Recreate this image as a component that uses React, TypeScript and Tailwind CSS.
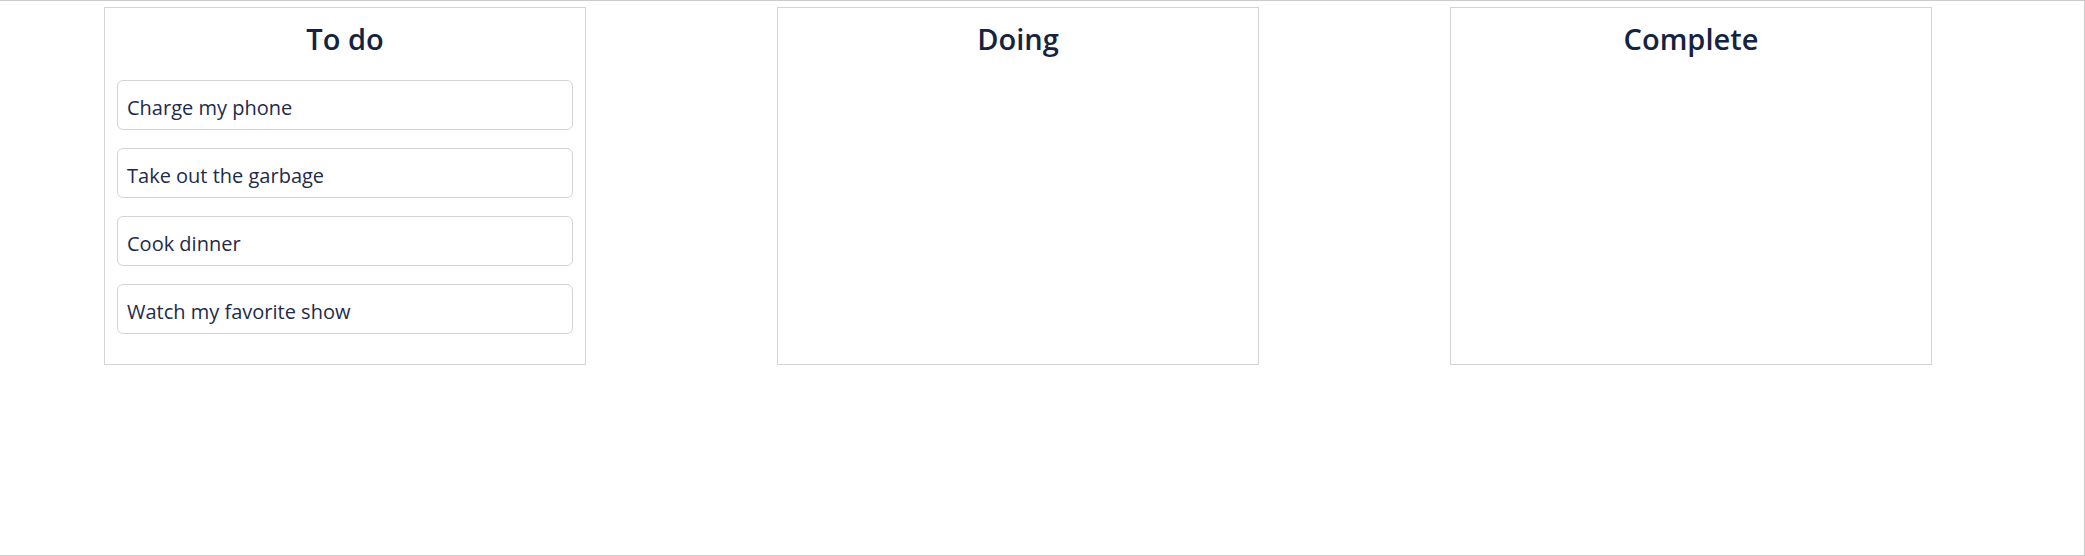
const columns = [
  {
    title: 'To do',
    items: ['Charge my phone', 'Take out the garbage', 'Cook dinner', 'Watch my favorite show'],
  },
  { title: 'Doing', items: [] as string[] },
  { title: 'Complete', items: [] as string[] },
];

const App = () => {
  return (
    <div
      className="h-[556px] w-full border-t border-r border-b border-[#cccccc] bg-white"
      style={{ fontFamily: '"Open Sans", "Noto Sans", sans-serif' }}
    >
      <div className="flex gap-[191px] pt-[6px] pl-[104px]">
        {columns.map((col) => (
          <div
            key={col.title}
            className="w-[482px] h-[358px] border border-[#d4d4d4] px-[12px] pt-[11px]"
          >
            <h2 className="text-center text-[29px] leading-[40px] font-semibold text-[#15233f]">
              {col.title}
            </h2>
            <div className="mt-[21px] flex flex-col gap-[18px]">
              {col.items.map((item) => (
                <div
                  key={item}
                  className="h-[50px] flex items-center border border-[#d4d4d4] rounded-[6px] px-[9px] pt-[5px] text-[20px] text-[#1e2b4a]"
                >
                  {item}
                </div>
              ))}
            </div>
          </div>
        ))}
      </div>
    </div>
  );
};

export default App;
